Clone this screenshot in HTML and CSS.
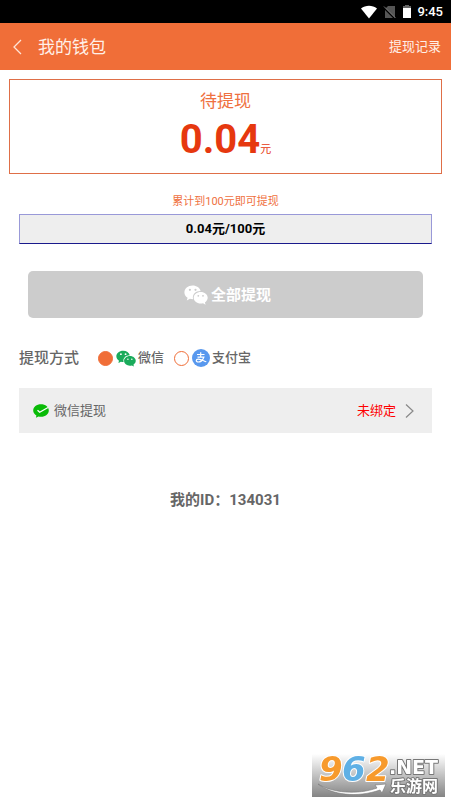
FILE: index.html
```html
<!DOCTYPE html>
<html lang="zh-CN">
<head>
<meta charset="utf-8">
<meta name="viewport" content="width=device-width, initial-scale=1">
<title>我的钱包</title>
<link rel="stylesheet" href="styles.css">
</head>
<body>
<svg class="defs" aria-hidden="true">
  <symbol id="wechat" viewBox="0 0 24 20">
    <path fill="currentColor" fill-rule="evenodd" d="M8.600 0.600C3.900 0.600 0.400 3.700 0.400 7.400c0 2.200 1.200 4 3.200 5.300L2.800 15.400l3.100-1.600c1 .3 2 .4 3.200 .4C8 9.600 11.600 6.100 16.600 6.100C15.800 2.900 12.600.6 8.600.6ZM5.900 3.700a1.100 1.100 0 1 1 0 2.200a1.100 1.100 0 0 1 0-2.200ZM11.500 3.700a1.100 1.100 0 1 1 0 2.200a1.100 1.100 0 0 1 0-2.200Z"/>
    <path fill="currentColor" fill-rule="evenodd" d="M16.700 7c-3.900 0-7 2.600-7 5.800s3.100 5.800 7 5.800c.8 0 1.600-.1 2.300-.3l2.600 1.400l-.7-2.300c1.700-1.100 2.800-2.700 2.800-4.600c0-3.200-3.100-5.800-7-5.800ZM14.300 9.900a.9.900 0 1 1 0 1.800a.9.900 0 0 1 0-1.800ZM19 9.900a.9.900 0 1 1 0 1.800a.9.900 0 0 1 0-1.800Z"/>
  </symbol>
</svg>

<div class="status">
  <svg width="18" height="16" viewBox="0 0 18 16" aria-hidden="true"><path fill="#fff" d="M1 4.500C5.500.9 12.500.9 17 4.500L9 14.500Z"/></svg>
  <svg width="14" height="16" viewBox="0 0 14 16" aria-hidden="true"><path fill="#555" d="M5 2h7v12H2V5Z"/><path d="M0 3L12 15" stroke="#000" stroke-width="1.500"/><path d="M1 2.500l11.500 11.500" stroke="#777" stroke-width="1"/></svg>
  <svg width="10" height="16" viewBox="0 0 10 16" aria-hidden="true"><path fill="#666" d="M3 1h4v1h2v3H1V2h2Z"/><path fill="#fff" d="M1 4h8v10H1Z"/></svg>
  <span class="clock">9:45</span>
</div>

<header class="bar">
  <a class="back" href="#" aria-label="返回"><svg width="10" height="16" viewBox="0 0 10 16" fill="none" stroke="#ffe4d6" stroke-width="1.300"><path d="M9 1L2 8l7 7"/></svg></a>
  <h1>我的钱包</h1>
  <a class="history" href="#">提现记录</a>
</header>

<main>
  <section class="balance">
    <h2>待提现</h2>
    <p class="amount"><strong>0.04</strong><span>元</span></p>
  </section>

  <div class="content">
    <p class="hint">累计到100元即可提现</p>
    <div class="progress">0.04元/100元</div>
    <button class="withdraw" type="button"><svg width="24" height="20" aria-hidden="true"><use href="#wechat"/></svg>全部提现</button>

    <fieldset class="methods">
      <legend>提现方式</legend>
      <label class="wx"><input type="radio" name="method" checked><svg width="20" height="17" aria-hidden="true"><use href="#wechat"/></svg>微信</label>
      <label><input type="radio" name="method"><svg width="18" height="18" viewBox="0 0 18 18" aria-hidden="true"><circle cx="9" cy="9" r="9" fill="#5898ee"/><path d="M5 5.500h7.500M8.700 3.200v5M5.500 8.200h6.300c-.8 2.300-2.800 4.800-5.600 4.800c-2.600 0-2.600-2.900.1-2.900c2.500 0 4.500 1.300 8 2.700" fill="none" stroke="#fff" stroke-width="1.200"/></svg>支付宝</label>
    </fieldset>

    <a class="account" href="#">
      <svg width="16" height="14" viewBox="0 0 16 14" aria-hidden="true"><path fill="#09bb07" d="M8 .2c4.400 0 7.800 2.700 7.800 6.300S12.400 12.800 8 12.800c-.9 0-1.700-.1-2.500-.3L2.900 13.800l.5-2.300C1.500 10.300.2 8.500.2 6.500C.2 2.900 3.600.2 8 .2Z"/><path d="M4.500 6.300l2.200 2L15 3.500" fill="none" stroke="#fff" stroke-width="1.300"/></svg>
      <span class="name">微信提现</span>
      <span class="state">未绑定</span>
      <svg width="9" height="14" viewBox="0 0 9 14" fill="none" stroke="#888" stroke-width="1.200" aria-hidden="true"><path d="M1 .5L8 7l-7 6.500"/></svg>
    </a>

    <p class="uid">我的ID：134031</p>
  </div>
</main>

<div class="watermark">
  <svg width="133" height="43" viewBox="0 0 133 43" role="img" aria-label="962.NET 乐游网">
    <path d="M6 30C20 39 46 41 65 34L63 31L74 30L70 39L68 36C45 44 20 41 6 30Z" fill="#fff" stroke="#777" stroke-width=".6"/>
    <g class="digits">
      <text x="7" y="27" fill="#f79a2c">9</text>
      <text x="30" y="27" fill="#5fb0e5">6</text>
      <text x="54" y="27" fill="#f79a2c">2</text>
    </g>
    <text class="net" x="77" y="20">.NET</text>
    <text class="cn" x="78" y="38">乐游网</text>
  </svg>
</div>
</body>
</html>
```

FILE: styles.css
```css
* {
  box-sizing: border-box;
}

body {
  margin: 0;
  background: #fff;
  color: #666;
  font-family: Roboto, "Noto Sans CJK SC", sans-serif;
  font-size: 13px;
  line-height: 20px;
}

h1,
h2,
p {
  margin: 0;
  font-weight: 400;
}

a {
  color: inherit;
  text-decoration: none;
}

svg {
  flex: none;
}

.defs {
  position: absolute;
  width: 0;
  height: 0;
}

.status {
  display: flex;
  align-items: center;
  justify-content: flex-end;
  gap: 5px;
  height: 23px;
  padding-right: 8px;
  background: #000;
  color: #fff;
}

.clock {
  font-weight: 500;
}

.bar {
  display: flex;
  align-items: center;
  height: 47px;
  padding: 0 10px 0 12px;
  background: #f06e38;
  color: #fff0e8;
}

.back {
  display: flex;
  margin-right: 16px;
}

.bar h1 {
  flex: 1;
  font-size: 17px;
}

.balance {
  margin: 9px 9px 0;
  padding: 10px 0 9px;
  border: 1px solid #df6f48;
  color: #ef7040;
  text-align: center;
}

.balance h2 {
  margin-bottom: 4px;
  font-size: 17px;
  line-height: 22px;
}

.amount {
  display: flex;
  align-items: baseline;
  justify-content: center;
  color: #e6380f;
  font-size: 11px;
}

.amount strong {
  font-size: 40px;
  line-height: 48px;
}

.content {
  padding: 18px 19px 0;
}

.hint {
  color: #ef7040;
  font-size: 11px;
  text-align: center;
}

.progress {
  margin-top: 2px;
  padding: 4px 0;
  border: 1px solid #9999d8;
  border-bottom-color: #1a1a8c;
  background: #eee;
  color: #000;
  font-weight: 700;
  text-align: center;
}

.withdraw {
  display: flex;
  align-items: center;
  justify-content: center;
  gap: 3px;
  width: calc(100% - 18px);
  height: 47px;
  margin: 27px 9px 0;
  padding: 0 0 0 4px;
  border: 0;
  border-radius: 5px;
  background: #ccc;
  color: #fff;
  font: inherit;
  font-size: 15px;
  font-weight: 700;
}

.methods {
  display: flex;
  align-items: center;
  gap: 10px;
  margin: 30px 0 0;
  padding: 0;
  border: 0;
  font-weight: 500;
}

.methods legend {
  float: left;
  margin-right: 9px;
  padding: 0;
  font-size: 15px;
}

.methods label {
  display: flex;
  align-items: center;
  gap: 2px;
}

.wx svg {
  color: #1aab5b;
}

.methods input {
  width: 15px;
  height: 15px;
  margin: 0 1px 0 0;
  border: 1px solid #f06e38;
  border-radius: 50%;
  appearance: none;
}

.methods input:checked {
  background: #f06e38;
}

.account {
  display: flex;
  align-items: center;
  height: 45px;
  margin-top: 20px;
  padding: 0 18px 0 14px;
  background: #eee;
}

.name {
  flex: 1;
  margin-left: 5px;
}

.state {
  margin-right: 9px;
  color: #f00;
}

.uid {
  margin-top: 57px;
  font-size: 15px;
  font-weight: 700;
  text-align: center;
}

.watermark {
  position: fixed;
  right: 6px;
  bottom: 6px;
  height: 43px;
  background: linear-gradient(#fff, #848484);
}

.watermark svg {
  overflow: visible;
}

.watermark text {
  paint-order: stroke;
  stroke-linejoin: round;
  stroke-width: 2px;
}

.digits {
  font: italic 700 34px "DejaVu Sans", sans-serif;
  stroke: #fff;
}

.net,
.cn {
  fill: #fff;
  stroke: #777;
}

.net {
  font: 700 19px "DejaVu Sans", sans-serif;
}

.cn {
  font: 700 16px "Noto Sans CJK SC", sans-serif;
}
```
